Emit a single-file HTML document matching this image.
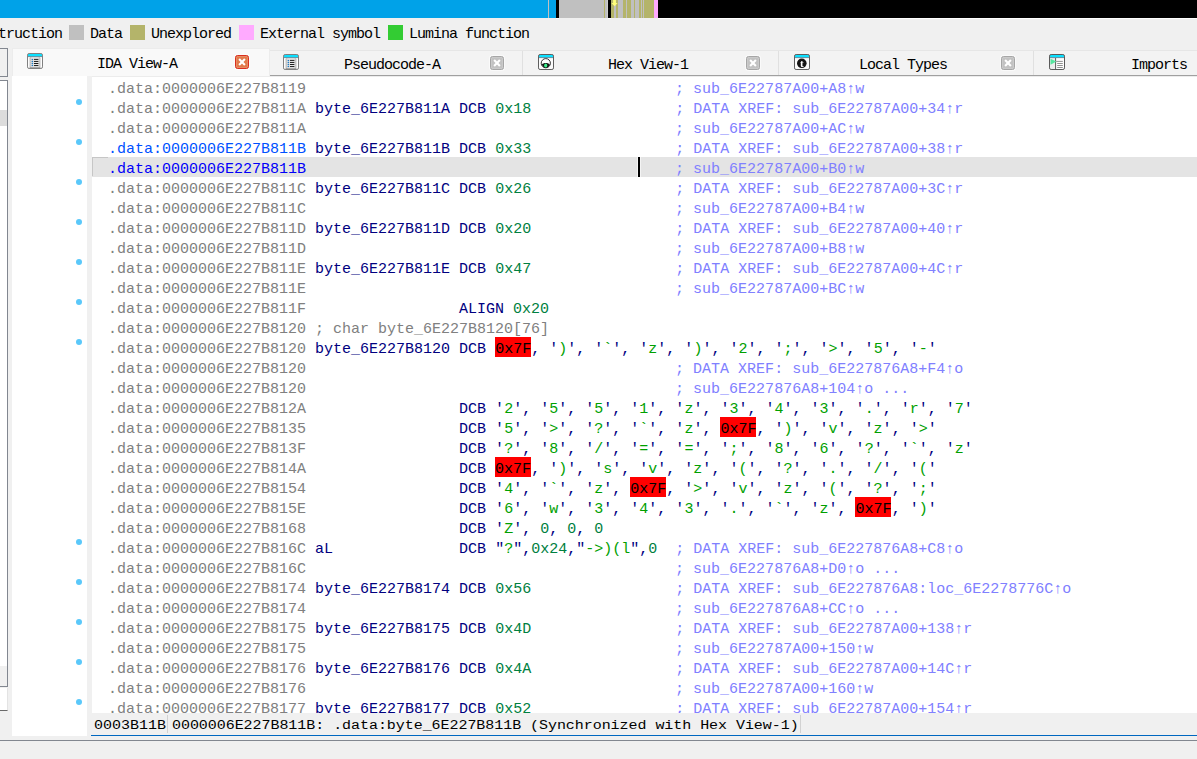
<!DOCTYPE html>
<html lang="en">
<head>
<meta charset="utf-8">
<title>IDA View-A</title>
<style>
html,body{margin:0;padding:0}
body{width:1197px;height:759px;background:#f0f0f0;position:relative;overflow:hidden;font-family:"Liberation Mono","DejaVu Sans Mono",monospace;color:#000}
.abs,.nav i,.dot,.row,.sw,.lg,.tab,.tx,.cl,.ic,.sep{position:absolute;display:block}
/* navigator band */
.nav{position:absolute;left:0;top:0;width:1197px;height:18px;background:#000;overflow:hidden}
.nav i{top:0;height:18px}
.gy{background:#c0c0c0}.ol{background:#b4b46a}.bl{background:#00a2e8}.pk{background:#ffaaff}.bk{background:#000}
/* legend */
.sw{top:25px;width:15px;height:15px}
.lg{top:26px;height:18px;line-height:18px;font-size:15px;letter-spacing:-1px;white-space:pre}
/* tabs */
.tabbar{position:absolute;left:12px;top:50px;width:1185px;height:25px;background:#f3f3f3;border-top:1px solid #e6e6e6;box-sizing:border-box}
.tabline{position:absolute;left:12px;top:75px;width:1185px;height:1px;background:#a0a0a0}
.tabline2{position:absolute;left:92px;top:76px;width:1105px;height:1px;background:#ececec}
.tab.act{left:12px;top:48px;width:258px;height:28px;background:#f9f9f9;border-top:1px solid #ececec;border-left:1px solid #ececec;border-right:1px solid #ececec;box-sizing:border-box}
.tx{height:18px;line-height:18px;font-size:15px;letter-spacing:-1px;white-space:pre}
.sep{top:51px;width:1px;height:24px;background:#e0e0e0}
.cl{width:14px;height:14px;box-sizing:border-box;border-radius:2.5px;background:#c2c2c2;border:1px solid #a6a6a6;box-shadow:0 0 0 1px rgba(255,255,255,.55),inset 0 0 0 1px rgba(255,255,255,.14)}
.cl.on{background:#e2794a;border-color:#da2f1f}
.cl svg,.ic svg{display:block;position:absolute;left:0;top:0}
.cl svg{left:-1px;top:-1px}
.ic{width:16px;height:16px;will-change:transform}
/* listing */
.margin{position:absolute;left:12px;top:76px;width:75px;height:660px;background:#fff}
.list{position:absolute;left:92px;top:77px;width:1105px;height:636px;background:#fff;overflow:hidden}
.row{left:0;width:1105px;height:20px;line-height:20px;font-size:15px;white-space:pre;padding-left:16px;box-sizing:border-box}
.row span{position:relative;top:3px}
.row.hl{background:#e4e4e4}
.a{color:#808080}.b1{color:#0050ff}.b2{color:#0000f8}.n{color:#000080}.g{color:#008040}.s{color:#00a000}.c{color:#8080ff}
.r{color:#000}
.rb{position:absolute;top:0;width:36px;height:20px;background:#ff0000}
.dot{left:76px;width:6px;height:6px;border-radius:50%;background:#5ac8fa}
/* status */
.status{position:absolute;left:91px;top:713px;width:1106px;height:22px;background:#f0f0f0;border-bottom:1px solid #0067c0}
.st{position:absolute;top:3px;transform:scaleY(.87);transform-origin:0 14px;height:20px;line-height:20px;font-size:15px;white-space:pre}
</style>
</head>
<body>
<!-- navigator band -->
<div class="nav">
<i class="bl" style="left:0;width:556px"></i><i class="gy" style="left:548px;width:1px"></i>
<i class="gy" style="left:559px;width:49px"></i>
<i class="ol" style="left:604px;width:1px"></i><i style="left:607px;width:1px;background:#cfcfcf"></i>
<i class="bk" style="left:608px;width:3px"></i>
<i class="gy" style="left:611px;width:43px"></i>
<i class="ol" style="left:611px;width:3px"></i><i class="ol" style="left:616px;width:2px"></i>
<i class="ol" style="left:623px;width:3px"></i><i class="ol" style="left:627px;width:4px"></i>
<i class="ol" style="left:634px;width:1px"></i><i class="ol" style="left:639px;width:2px"></i>
<i class="ol" style="left:642px;width:1px"></i><i class="ol" style="left:644px;width:10px"></i>
<i class="pk" style="left:654px;width:4px"></i>
<svg class="abs" style="left:610px;top:0" width="9" height="8" viewBox="0 0 9 8"><path d="M3.1 0h2.8v3h1.7L4.5 6.3 1.4 3h1.7z" fill="#ffff7a"/></svg>
</div>
<div class="abs" style="left:608px;top:18px;width:3px;height:1px;background:#fff"></div>
<div class="abs" style="left:556px;top:18px;width:3px;height:1px;background:#fff"></div>
<div class="abs" style="left:658px;top:18px;width:539px;height:1px;background:#fff"></div>

<!-- legend -->
<div class="lg" style="left:-26px">Instruction</div>
<i class="sw gy" style="left:69px"></i><div class="lg" style="left:90px">Data</div>
<i class="sw ol" style="left:130px"></i><div class="lg" style="left:151px">Unexplored</div>
<i class="sw pk" style="left:239px"></i><div class="lg" style="left:260px">External symbol</div>
<i class="sw" style="left:388px;background:#33cc33"></i><div class="lg" style="left:409px">Lumina function</div>

<!-- left dock fragments -->
<div class="abs" style="left:-1px;top:48px;width:9px;height:29px;box-sizing:border-box;border:1px solid #828790;background:#f0f0f0"></div>
<div class="abs" style="left:-1px;top:80px;width:9px;height:607px;box-sizing:border-box;border:1px solid #828790;background:#fff"></div>
<div class="abs" style="left:0;top:110px;width:7px;height:16px;background:#dcdcdc"></div>
<div class="abs" style="left:0;top:666px;width:7px;height:20px;background:#f0f0f0"></div>
<div class="abs" style="left:0;top:688px;width:7px;height:22px;background:#fff;border-right:1px solid #e3e3e3;border-bottom:1px solid #696969"></div>

<!-- tab bar -->
<div class="tabbar"></div><div class="tabline"></div>
<div class="tab act"></div><div class="tabline2"></div>
<i class="sep" style="left:522px"></i><i class="sep" style="left:778px"></i><i class="sep" style="left:1033px"></i>

<!-- tab 1 -->
<div class="ic" style="left:27px;top:53px"><svg width="16" height="16" viewBox="0 0 16 16"><rect x="1" y="1" width="14" height="14" fill="#fdfdfd"/><rect x="2.6" y="4.2" width="10.8" height="10.8" rx="1" fill="#b2b2b2"/><rect x="3.3" y="4.2" width="9.4" height="10.4" fill="#cdcdcd"/><rect x="4" y="4.2" width="8" height="10.4" fill="#dedede"/><rect x="4.8" y="4.2" width="6.4" height="10.4" fill="#e7e7e7"/><path d="M2.6 14.6h10.8" stroke="#9a9a9a" stroke-width=".9"/><g fill="#1878c0"><circle cx="5.3" cy="6.4" r=".75"/><circle cx="5.3" cy="8.45" r=".75"/><circle cx="5.3" cy="10.5" r=".75"/><circle cx="5.3" cy="12.55" r=".75"/></g><g stroke="#1c1c1c" stroke-width="1" stroke-linecap="round"><path d="M7.3 6.4h3.7M7.3 8.45h3.7M7.3 10.5h3.7M7.3 12.55h3.7"/></g><rect x="1" y="1" width="14" height="2.2" fill="#0be0ff"/><path d="M1 3.6h14" stroke="#4a8596" stroke-width=".9"/><rect x=".5" y=".5" width="15" height="15" rx="1.6" fill="none" stroke="#808080"/></svg></div>
<div class="tx" style="left:97px;top:56px">IDA View-A</div>
<div class="cl on" style="left:235px;top:55px"><svg width="14" height="14" viewBox="0 0 14 14"><path d="M4.1 4.1l5.8 5.8M9.9 4.1l-5.8 5.8" stroke="#fff" stroke-width="2.1" fill="none"/></svg></div>

<!-- tab 2 -->
<div class="ic" style="left:283px;top:54px"><svg width="16" height="16" viewBox="0 0 16 16"><rect x="1" y="1" width="14" height="14" fill="#fdfdfd"/><rect x="2.6" y="4.2" width="10.8" height="10.8" rx="1" fill="#b2b2b2"/><rect x="3.3" y="4.2" width="9.4" height="10.4" fill="#cdcdcd"/><rect x="4" y="4.2" width="8" height="10.4" fill="#dedede"/><rect x="4.8" y="4.2" width="6.4" height="10.4" fill="#e7e7e7"/><path d="M2.6 14.6h10.8" stroke="#9a9a9a" stroke-width=".9"/><g fill="#1878c0"><circle cx="5.3" cy="6.4" r=".75"/><circle cx="5.3" cy="8.45" r=".75"/><circle cx="5.3" cy="10.5" r=".75"/><circle cx="5.3" cy="12.55" r=".75"/></g><g stroke="#1c1c1c" stroke-width="1" stroke-linecap="round"><path d="M7.3 6.4h3.7M7.3 8.45h3.7M7.3 10.5h3.7M7.3 12.55h3.7"/></g><rect x="1" y="1" width="14" height="2.2" fill="#0be0ff"/><path d="M1 3.6h14" stroke="#4a8596" stroke-width=".9"/><rect x=".5" y=".5" width="15" height="15" rx="1.6" fill="none" stroke="#808080"/></svg></div>
<div class="tx" style="left:344px;top:57px">Pseudocode-A</div>
<div class="cl" style="left:490px;top:56px"><svg width="14" height="14" viewBox="0 0 14 14"><path d="M4.1 4.1l5.8 5.8M9.9 4.1l-5.8 5.8" stroke="#fff" stroke-width="2.1" fill="none"/></svg></div>

<!-- tab 3 -->
<div class="ic" style="left:538px;top:54px"><svg width="16" height="16" viewBox="0 0 16 16"><rect x="1" y="1" width="14" height="14" fill="#fbfbfb"/><circle cx="7.8" cy="9.2" r="4.6" fill="#fff" stroke="#1a1a1a" stroke-width=".9"/><path d="M3.9 10.6 C5 8.6 10.6 8.6 11.7 10.6 C11 13 9.4 14 7.8 14 C6.2 14 4.6 13 3.9 10.6z" fill="#141414"/><ellipse cx="7.7" cy="11.5" rx="1.55" ry="2.1" fill="#3cf08c"/><rect x="1" y="1" width="14" height="2.2" fill="#0be0ff"/><path d="M1 3.6h14" stroke="#4a8596" stroke-width=".9"/><rect x=".5" y=".5" width="15" height="15" rx="1.6" fill="none" stroke="#5e5e5e"/></svg></div>
<div class="tx" style="left:608px;top:57px">Hex View-1</div>
<div class="cl" style="left:746px;top:56px"><svg width="14" height="14" viewBox="0 0 14 14"><path d="M4.1 4.1l5.8 5.8M9.9 4.1l-5.8 5.8" stroke="#fff" stroke-width="2.1" fill="none"/></svg></div>

<!-- tab 4 -->
<div class="ic" style="left:794px;top:54px"><svg width="16" height="16" viewBox="0 0 16 16"><rect x="1" y="1" width="14" height="14" fill="#fbfbfb"/><circle cx="7.8" cy="9.3" r="4.8" fill="#141414"/><text x="7.9" y="12.9" font-family="Liberation Serif,serif" font-weight="bold" font-size="11" fill="#fff" text-anchor="middle">t</text><rect x="1" y="1" width="14" height="2.2" fill="#0be0ff"/><path d="M1 3.6h14" stroke="#4a8596" stroke-width=".9"/><rect x=".5" y=".5" width="15" height="15" rx="1.6" fill="none" stroke="#5e5e5e"/></svg></div>
<div class="tx" style="left:859px;top:57px">Local Types</div>
<div class="cl" style="left:1001px;top:56px"><svg width="14" height="14" viewBox="0 0 14 14"><path d="M4.1 4.1l5.8 5.8M9.9 4.1l-5.8 5.8" stroke="#fff" stroke-width="2.1" fill="none"/></svg></div>

<!-- tab 5 -->
<div class="ic" style="left:1049px;top:54px"><svg width="16" height="16" viewBox="0 0 16 16"><rect x="1" y="1" width="14" height="14" fill="#fdfdfd"/><rect x="1" y="4" width="5.4" height="11" fill="#ededed"/><path d="M6.6 4v11.5" stroke="#5a5a5a" stroke-width="1"/><path d="M1.5 4.7l5.9 2.9-5.9 3.2z" fill="#58e6a0"/><path d="M7.2 7.4h6.6M8.2 9.5h5.6M8.2 11.5h5.6M8.2 13.5h5.6" stroke="#858585" stroke-width=".9"/><rect x="1" y="1" width="14" height="2.2" fill="#0be0ff"/><path d="M1 3.6h14" stroke="#4a8596" stroke-width=".9"/><rect x=".5" y=".5" width="15" height="15" rx="1.6" fill="none" stroke="#5a5a5a"/></svg></div>
<div class="tx" style="left:1131px;top:57px">Imports</div>

<!-- margin + listing -->
<div class="margin"></div>
<i class="dot" style="top:99px"></i>
<i class="dot" style="top:139px"></i>
<i class="dot" style="top:179px"></i>
<i class="dot" style="top:219px"></i>
<i class="dot" style="top:259px"></i>
<i class="dot" style="top:299px"></i>
<i class="dot" style="top:339px"></i>
<i class="dot" style="top:539px"></i>
<i class="dot" style="top:579px"></i>
<i class="dot" style="top:619px"></i>
<i class="dot" style="top:659px"></i>
<i class="dot" style="top:699px"></i>
<div class="list">
<div class="row" style="top:0px"><span class="a">.data:0000006E227B8119</span>                                         <span class="c">; sub_6E22787A00+A8↑w</span></div>
<div class="row" style="top:20px"><span class="a">.data:0000006E227B811A</span> <span class="n">byte_6E227B811A</span> <span class="n">DCB</span> <span class="g">0x18</span>                <span class="c">; DATA XREF: sub_6E22787A00+34↑r</span></div>
<div class="row" style="top:40px"><span class="a">.data:0000006E227B811A</span>                                         <span class="c">; sub_6E22787A00+AC↑w</span></div>
<div class="row" style="top:60px"><span class="b1">.data:0000006E227B811B</span> <span class="n">byte_6E227B811B</span> <span class="n">DCB</span> <span class="g">0x33</span>                <span class="c">; DATA XREF: sub_6E22787A00+38↑r</span></div>
<div class="row hl" style="top:80px"><span class="b2">.data:0000006E227B811B</span>                                         <span class="c">; sub_6E22787A00+B0↑w</span></div>
<div class="row" style="top:100px"><span class="a">.data:0000006E227B811C</span> <span class="n">byte_6E227B811C</span> <span class="n">DCB</span> <span class="g">0x26</span>                <span class="c">; DATA XREF: sub_6E22787A00+3C↑r</span></div>
<div class="row" style="top:120px"><span class="a">.data:0000006E227B811C</span>                                         <span class="c">; sub_6E22787A00+B4↑w</span></div>
<div class="row" style="top:140px"><span class="a">.data:0000006E227B811D</span> <span class="n">byte_6E227B811D</span> <span class="n">DCB</span> <span class="g">0x20</span>                <span class="c">; DATA XREF: sub_6E22787A00+40↑r</span></div>
<div class="row" style="top:160px"><span class="a">.data:0000006E227B811D</span>                                         <span class="c">; sub_6E22787A00+B8↑w</span></div>
<div class="row" style="top:180px"><span class="a">.data:0000006E227B811E</span> <span class="n">byte_6E227B811E</span> <span class="n">DCB</span> <span class="g">0x47</span>                <span class="c">; DATA XREF: sub_6E22787A00+4C↑r</span></div>
<div class="row" style="top:200px"><span class="a">.data:0000006E227B811E</span>                                         <span class="c">; sub_6E22787A00+BC↑w</span></div>
<div class="row" style="top:220px"><span class="a">.data:0000006E227B811F</span>                 <span class="n">ALIGN</span> <span class="g">0x20</span></div>
<div class="row" style="top:240px"><span class="a">.data:0000006E227B8120</span> <span class="a">; char byte_6E227B8120[76]</span></div>
<div class="row" style="top:260px"><i class="rb" style="left:403px"></i><span class="a">.data:0000006E227B8120</span> <span class="n">byte_6E227B8120</span> <span class="n">DCB</span> <span class="r">0x7F</span><span class="n">, </span><span class="n">'</span><span class="s">)</span><span class="n">'</span><span class="n">, </span><span class="n">'</span><span class="s">`</span><span class="n">'</span><span class="n">, </span><span class="n">'</span><span class="s">z</span><span class="n">'</span><span class="n">, </span><span class="n">'</span><span class="s">)</span><span class="n">'</span><span class="n">, </span><span class="n">'</span><span class="s">2</span><span class="n">'</span><span class="n">, </span><span class="n">'</span><span class="s">;</span><span class="n">'</span><span class="n">, </span><span class="n">'</span><span class="s">&gt;</span><span class="n">'</span><span class="n">, </span><span class="n">'</span><span class="s">5</span><span class="n">'</span><span class="n">, </span><span class="n">'</span><span class="s">-</span><span class="n">'</span></div>
<div class="row" style="top:280px"><span class="a">.data:0000006E227B8120</span>                                         <span class="c">; DATA XREF: sub_6E227876A8+F4↑o</span></div>
<div class="row" style="top:300px"><span class="a">.data:0000006E227B8120</span>                                         <span class="c">; sub_6E227876A8+104↑o ...</span></div>
<div class="row" style="top:320px"><span class="a">.data:0000006E227B812A</span>                 <span class="n">DCB</span> <span class="n">'</span><span class="s">2</span><span class="n">'</span><span class="n">, </span><span class="n">'</span><span class="s">5</span><span class="n">'</span><span class="n">, </span><span class="n">'</span><span class="s">5</span><span class="n">'</span><span class="n">, </span><span class="n">'</span><span class="s">1</span><span class="n">'</span><span class="n">, </span><span class="n">'</span><span class="s">z</span><span class="n">'</span><span class="n">, </span><span class="n">'</span><span class="s">3</span><span class="n">'</span><span class="n">, </span><span class="n">'</span><span class="s">4</span><span class="n">'</span><span class="n">, </span><span class="n">'</span><span class="s">3</span><span class="n">'</span><span class="n">, </span><span class="n">'</span><span class="s">.</span><span class="n">'</span><span class="n">, </span><span class="n">'</span><span class="s">r</span><span class="n">'</span><span class="n">, </span><span class="n">'</span><span class="s">7</span><span class="n">'</span></div>
<div class="row" style="top:340px"><i class="rb" style="left:628px"></i><span class="a">.data:0000006E227B8135</span>                 <span class="n">DCB</span> <span class="n">'</span><span class="s">5</span><span class="n">'</span><span class="n">, </span><span class="n">'</span><span class="s">&gt;</span><span class="n">'</span><span class="n">, </span><span class="n">'</span><span class="s">?</span><span class="n">'</span><span class="n">, </span><span class="n">'</span><span class="s">`</span><span class="n">'</span><span class="n">, </span><span class="n">'</span><span class="s">z</span><span class="n">'</span><span class="n">, </span><span class="r">0x7F</span><span class="n">, </span><span class="n">'</span><span class="s">)</span><span class="n">'</span><span class="n">, </span><span class="n">'</span><span class="s">v</span><span class="n">'</span><span class="n">, </span><span class="n">'</span><span class="s">z</span><span class="n">'</span><span class="n">, </span><span class="n">'</span><span class="s">&gt;</span><span class="n">'</span></div>
<div class="row" style="top:360px"><span class="a">.data:0000006E227B813F</span>                 <span class="n">DCB</span> <span class="n">'</span><span class="s">?</span><span class="n">'</span><span class="n">, </span><span class="n">'</span><span class="s">8</span><span class="n">'</span><span class="n">, </span><span class="n">'</span><span class="s">/</span><span class="n">'</span><span class="n">, </span><span class="n">'</span><span class="s">=</span><span class="n">'</span><span class="n">, </span><span class="n">'</span><span class="s">=</span><span class="n">'</span><span class="n">, </span><span class="n">'</span><span class="s">;</span><span class="n">'</span><span class="n">, </span><span class="n">'</span><span class="s">8</span><span class="n">'</span><span class="n">, </span><span class="n">'</span><span class="s">6</span><span class="n">'</span><span class="n">, </span><span class="n">'</span><span class="s">?</span><span class="n">'</span><span class="n">, </span><span class="n">'</span><span class="s">`</span><span class="n">'</span><span class="n">, </span><span class="n">'</span><span class="s">z</span><span class="n">'</span></div>
<div class="row" style="top:380px"><i class="rb" style="left:403px"></i><span class="a">.data:0000006E227B814A</span>                 <span class="n">DCB</span> <span class="r">0x7F</span><span class="n">, </span><span class="n">'</span><span class="s">)</span><span class="n">'</span><span class="n">, </span><span class="n">'</span><span class="s">s</span><span class="n">'</span><span class="n">, </span><span class="n">'</span><span class="s">v</span><span class="n">'</span><span class="n">, </span><span class="n">'</span><span class="s">z</span><span class="n">'</span><span class="n">, </span><span class="n">'</span><span class="s">(</span><span class="n">'</span><span class="n">, </span><span class="n">'</span><span class="s">?</span><span class="n">'</span><span class="n">, </span><span class="n">'</span><span class="s">.</span><span class="n">'</span><span class="n">, </span><span class="n">'</span><span class="s">/</span><span class="n">'</span><span class="n">, </span><span class="n">'</span><span class="s">(</span><span class="n">'</span></div>
<div class="row" style="top:400px"><i class="rb" style="left:538px"></i><span class="a">.data:0000006E227B8154</span>                 <span class="n">DCB</span> <span class="n">'</span><span class="s">4</span><span class="n">'</span><span class="n">, </span><span class="n">'</span><span class="s">`</span><span class="n">'</span><span class="n">, </span><span class="n">'</span><span class="s">z</span><span class="n">'</span><span class="n">, </span><span class="r">0x7F</span><span class="n">, </span><span class="n">'</span><span class="s">&gt;</span><span class="n">'</span><span class="n">, </span><span class="n">'</span><span class="s">v</span><span class="n">'</span><span class="n">, </span><span class="n">'</span><span class="s">z</span><span class="n">'</span><span class="n">, </span><span class="n">'</span><span class="s">(</span><span class="n">'</span><span class="n">, </span><span class="n">'</span><span class="s">?</span><span class="n">'</span><span class="n">, </span><span class="n">'</span><span class="s">;</span><span class="n">'</span></div>
<div class="row" style="top:420px"><i class="rb" style="left:763px"></i><span class="a">.data:0000006E227B815E</span>                 <span class="n">DCB</span> <span class="n">'</span><span class="s">6</span><span class="n">'</span><span class="n">, </span><span class="n">'</span><span class="s">w</span><span class="n">'</span><span class="n">, </span><span class="n">'</span><span class="s">3</span><span class="n">'</span><span class="n">, </span><span class="n">'</span><span class="s">4</span><span class="n">'</span><span class="n">, </span><span class="n">'</span><span class="s">3</span><span class="n">'</span><span class="n">, </span><span class="n">'</span><span class="s">.</span><span class="n">'</span><span class="n">, </span><span class="n">'</span><span class="s">`</span><span class="n">'</span><span class="n">, </span><span class="n">'</span><span class="s">z</span><span class="n">'</span><span class="n">, </span><span class="r">0x7F</span><span class="n">, </span><span class="n">'</span><span class="s">)</span><span class="n">'</span></div>
<div class="row" style="top:440px"><span class="a">.data:0000006E227B8168</span>                 <span class="n">DCB</span> <span class="n">'</span><span class="s">Z</span><span class="n">'</span><span class="n">, </span><span class="g">0</span><span class="n">, </span><span class="g">0</span><span class="n">, </span><span class="g">0</span></div>
<div class="row" style="top:460px"><span class="a">.data:0000006E227B816C</span> <span class="n">aL</span>              <span class="n">DCB</span> <span class="n">"</span><span class="s">?</span><span class="n">",</span><span class="g">0x24</span><span class="n">,"</span><span class="s">-&gt;)(l</span><span class="n">",</span><span class="g">0</span>  <span class="c">; DATA XREF: sub_6E227876A8+C8↑o</span></div>
<div class="row" style="top:480px"><span class="a">.data:0000006E227B816C</span>                                         <span class="c">; sub_6E227876A8+D0↑o ...</span></div>
<div class="row" style="top:500px"><span class="a">.data:0000006E227B8174</span> <span class="n">byte_6E227B8174</span> <span class="n">DCB</span> <span class="g">0x56</span>                <span class="c">; DATA XREF: sub_6E227876A8:loc_6E2278776C↑o</span></div>
<div class="row" style="top:520px"><span class="a">.data:0000006E227B8174</span>                                         <span class="c">; sub_6E227876A8+CC↑o ...</span></div>
<div class="row" style="top:540px"><span class="a">.data:0000006E227B8175</span> <span class="n">byte_6E227B8175</span> <span class="n">DCB</span> <span class="g">0x4D</span>                <span class="c">; DATA XREF: sub_6E22787A00+138↑r</span></div>
<div class="row" style="top:560px"><span class="a">.data:0000006E227B8175</span>                                         <span class="c">; sub_6E22787A00+150↑w</span></div>
<div class="row" style="top:580px"><span class="a">.data:0000006E227B8176</span> <span class="n">byte_6E227B8176</span> <span class="n">DCB</span> <span class="g">0x4A</span>                <span class="c">; DATA XREF: sub_6E22787A00+14C↑r</span></div>
<div class="row" style="top:600px"><span class="a">.data:0000006E227B8176</span>                                         <span class="c">; sub_6E22787A00+160↑w</span></div>
<div class="row" style="top:620px"><span class="a">.data:0000006E227B8177</span> <span class="n">byte_6E227B8177</span> <span class="n">DCB</span> <span class="g">0x52</span>                <span class="c">; DATA XREF: sub_6E22787A00+154↑r</span></div>
<div class="abs" style="left:0;top:80px;width:16px;height:1px;background:#c6c6c6"></div>
<div class="abs" style="left:0;top:80px;width:1px;height:19px;background:#c6c6c6"></div>
<div class="abs" style="left:546px;top:80px;width:2px;height:20px;background:#000;box-shadow:-1px 0 0 #f4f4f4,1px 0 0 #f4f4f4"></div>
</div>

<!-- status -->
<div class="status">
<div class="st" style="left:3px">0003B11B</div>
<div class="abs" style="left:76px;top:2px;width:1px;height:18px;background:#d2d2d2"></div>
<div class="st" style="left:81px;letter-spacing:-.05px">0000006E227B811B: .data:byte_6E227B811B (Synchronized with Hex View-1)</div>
<div class="abs" style="left:709px;top:2px;width:1px;height:18px;background:#d2d2d2"></div>
</div>
<div class="abs" style="left:0;top:740px;width:1197px;height:1px;background:#828790"></div>
</body>
</html>
